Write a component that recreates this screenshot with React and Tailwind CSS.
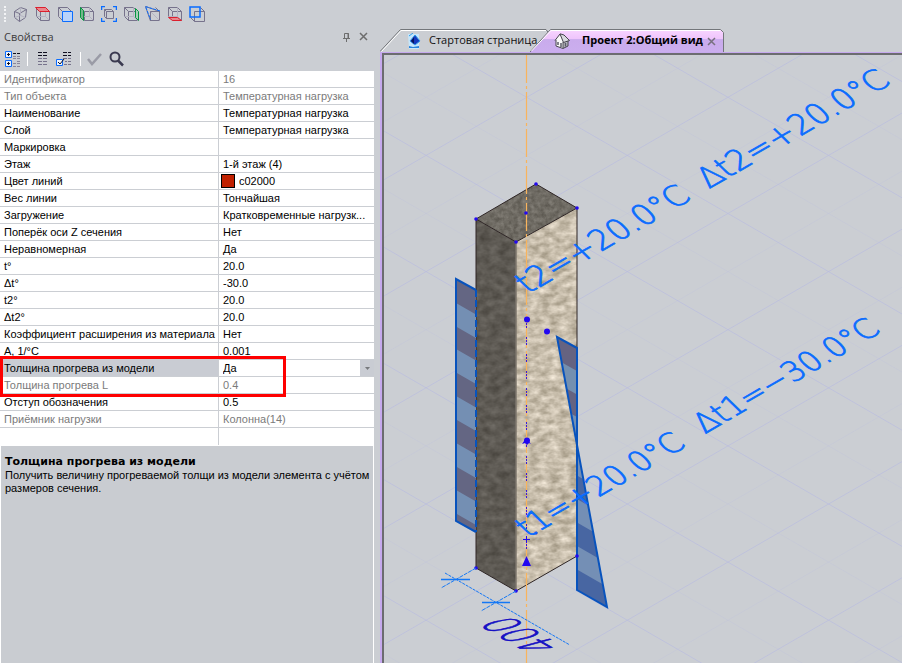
import React, { useState } from "react";

const properties = [
  { name: "Идентификатор", value: "16", readOnly: true },
  { name: "Тип объекта", value: "Температурная нагрузка", readOnly: true },
  { name: "Наименование", value: "Температурная нагрузка" },
  { name: "Слой", value: "Температурная нагрузка" },
  { name: "Маркировка", value: "" },
  { name: "Этаж", value: "1-й этаж (4)" },
  { name: "Цвет линий", value: "c02000", swatch: true },
  { name: "Вес линии", value: "Тончайшая" },
  { name: "Загружение", value: "Кратковременные нагрузк..." },
  { name: "Поперёк оси Z сечения", value: "Нет" },
  { name: "Неравномерная", value: "Да" },
  { name: "t°", value: "20.0" },
  { name: "Δt°", value: "-30.0" },
  { name: "t2°", value: "20.0" },
  { name: "Δt2°", value: "20.0" },
  { name: "Коэффициент расширения из материала", value: "Нет" },
  { name: "A, 1/°C", value: "0.001" },
  { name: "Толщина прогрева из модели", value: "Да", selected: true },
  { name: "Толщина прогрева L", value: "0.4", readOnly: true },
  { name: "Отступ обозначения", value: "0.5" },
  { name: "Приёмник нагрузки", value: "Колонна(14)", readOnly: true },
];

const GRAY = "#77738c";
const BLUE = "#0a6cff";

// Wireframe box shared by the view icons
function Box() {
  return (
    <g stroke={GRAY} fill="none">
      <path d="M5.5 5.5h9v9h-9zM1.5 1.5h9l4 4M1.5 1.5l4 4M1.5 1.5v9l4 4" />
      <path d="M10.5 1.5v9h-9M10.5 10.5l4 4" stroke="#b4b3c2" />
    </g>
  );
}

const viewIcons = [
  {
    label: "Аксонометрия",
    art: (
      <g stroke={GRAY} fill="none">
        <path d="M1.5 5.5l6-4 6 2-1 8-6 4-5-4zM1.5 5.5l5 2 7-4M6.5 7.5v8" />
        <path d="M7.5 1.5v8l-6 2M7.5 9.5l5 2" stroke="#b4b3c2" />
      </g>
    ),
  },
  {
    label: "Сверху",
    art: (
      <>
        <Box />
        <path d="M.5 1.5h10l4 4h-10z" fill="#e9868c" stroke="#dc1f2d" />
      </>
    ),
  },
  {
    label: "Спереди",
    art: (
      <>
        <path d="M1.5 1.5h9l4 4M1.5 1.5l4 4M1.5 1.5v9l4 4" stroke={GRAY} fill="none" />
        <path d="M5.5 5.5h10v10h-10z" fill="#b9d3fa" stroke={BLUE} />
      </>
    ),
  },
  {
    label: "Слева",
    art: (
      <>
        <Box />
        <path d="M1.5 1.5l3 3v10l-3-3z" fill="#72b58b" stroke="#079541" />
      </>
    ),
  },
  {
    label: "Вписать",
    art: (
      <>
        <path d="M.5 4V.5H4M12 .5h3.5V4M.5 12v3.5H4M12 15.5h3.5V12" fill="none" stroke={BLUE} strokeWidth="1.5" />
        <path d="M5.5 5.5h7v7h-7zM3.5 3.5h7l2 2M3.5 3.5l2 2M3.5 3.5v7l2 2" fill="none" stroke={GRAY} />
      </>
    ),
  },
  {
    label: "Справа",
    art: (
      <>
        <Box />
        <path d="M12.5 2.5l3 3v9l-3-3z" fill="#a8cdb7" stroke="#079541" />
      </>
    ),
  },
  {
    label: "По грани",
    art: (
      <>
        <path d="M5.5 5.5h9v9h-9M10.5 1.5l4 4" fill="none" stroke={GRAY} />
        <path d="M5.5 5.5l9 9" stroke="#b4b3c2" />
        <path d="M15 5.5H5.5V15L.5 .5L15 5.500" fill="none" stroke={GRAY} />
        <path d="M15 5L.5 .5l5 13" fill="none" stroke={BLUE} strokeDasharray="3 1" />
      </>
    ),
  },
  {
    label: "Снизу",
    art: (
      <>
        <Box />
        <path d="M1.5 11.5h9l4 3h-9z" fill="#e9868c" stroke="#dc1f2d" />
      </>
    ),
  },
  {
    label: "Сзади",
    art: (
      <>
        <path d="M5.5 5.5h10v10h-10zM1.5 11.5l4 4M11.5 1.5l4 4" stroke={GRAY} fill="none" />
        <path d="M1 1h10v10H1z" fill="none" stroke={BLUE} strokeWidth="1.5" />
      </>
    ),
  },
];

function IconButton({ label, className, children }) {
  return (
    <button aria-label={label} className={className}>
      <svg width="16" height="16" viewBox="0 0 16 16">
        {children}
      </svg>
    </button>
  );
}

function ViewToolbar() {
  return (
    <div className="flex h-7 items-center gap-[6px] pl-1">
      <div className="h-4 w-[3px] border-l-2 border-dotted border-[#f2f3f5]" />
      {viewIcons.map((icon) => (
        <IconButton key={icon.label} label={icon.label}>
          {icon.art}
        </IconButton>
      ))}
    </div>
  );
}

function PanelToolbar() {
  return (
    <div className="flex h-[25px] items-center pl-1">
      <IconButton label="По категориям" className="mr-[7px]">
        <path d="M1.5 .5h6v6h-6zM1.5 9.5h6v6h-6z" fill="#eef3fb" stroke={BLUE} />
        <path d="M3 3.5h3M4.5 2v3M3 12.5h3M4.5 11v3M9 2.5h3M13 2.5h3" stroke="#101020" />
        <path
          d="M9 5.5h3M13 5.5h3M9 7.5h3M13 7.5h3M13 10.5h3M9 12.5h3M13 12.5h3M9 15.5h3M13 15.5h3"
          stroke="#8a879b"
        />
      </IconButton>
      <div className="mr-2 h-[14px] w-px bg-white" />
      <IconButton label="По алфавиту" className="mr-1">
        <path d="M2 1.5h4M7 1.5h4M2 4.5h4M7 4.5h4" stroke="#101020" />
        <path d="M2 7.5h4M7 7.5h4M2 10.5h4M7 10.5h4M2 13.5h4M7 13.5h4" stroke={GRAY} />
      </IconButton>
      <IconButton label="Только заданные" className="mr-2">
        <path d="M.5 8.5h6v6h-6z" fill="#eef3fb" stroke={BLUE} />
        <path d="M2 11l2 2 4-5M7 1.5h4M12 1.5h3M7 4.5h4M12 4.5h3" fill="none" stroke="#101020" />
        <path d="M7 7.5h4M12 7.5h3M9 10.5h2M12 10.5h3M8 13.5h3M12 13.5h3" stroke={GRAY} />
      </IconButton>
      <div className="mr-[6px] h-[14px] w-px bg-white" />
      <IconButton label="Применить" className="mr-[6px]">
        <path d="M1 8l4 5L14 3" fill="none" stroke="#9a9ba6" strokeWidth="2.5" />
      </IconButton>
      <IconButton label="Найти">
        <circle cx="6" cy="6" r="4.5" fill="none" stroke="#3b3a50" strokeWidth="2" />
        <path d="M9 9.500l5 5" stroke="#3b3a50" strokeWidth="2.5" />
      </IconButton>
    </div>
  );
}

function PropertyRow({ item, value, onChange }) {
  const textColor = item.readOnly ? "text-[#7b7b7b]" : "text-black";

  if (item.selected) {
    return (
      <tr className="h-[17px]">
        <th className="relative border-r border-b border-[#cbced3] bg-[#c9ccd3] pl-1 text-left font-normal">
          <label htmlFor="heating">{item.name}</label>
          <div className="pointer-events-none absolute -top-1 left-0 z-10 h-[41px] w-[286px] border-3 border-[#fe0000]" />
        </th>
        <td className="relative border-b border-[#cbced3] bg-white p-0">
          <select
            id="heating"
            value={value}
            onChange={(e) => onChange(e.target.value)}
            className="block h-4 w-full appearance-none pl-1 leading-4"
          >
            <option>Да</option>
            <option>Нет</option>
          </select>
          <div className="pointer-events-none absolute top-0 right-0 flex h-4 w-[14px] items-center justify-center bg-[#c9ccd3]">
            <svg width="5" height="3" viewBox="0 0 5 3">
              <path d="M0 0h5L2.5 3z" fill="#77797d" />
            </svg>
          </div>
        </td>
      </tr>
    );
  }

  return (
    <tr className={`h-[17px] ${textColor}`}>
      <th className="border-r border-b border-[#cbced3] bg-white pl-1 text-left font-normal whitespace-nowrap">
        {item.name}
      </th>
      <td className="border-b border-[#cbced3] bg-white p-0">
        <div className={item.swatch ? "flex items-center gap-1 pl-[2px]" : "pl-1 whitespace-nowrap"}>
          {item.swatch && <span className="size-[14px] border border-black bg-[#c02000]" />}
          {item.value}
        </div>
      </td>
    </tr>
  );
}

function PropertiesPanel() {
  const [heating, setHeating] = useState("Да");

  return (
    <aside className="flex w-[374px] shrink-0 flex-col">
      <div className="flex h-[18px] items-center pr-[5px] pl-1">
        <h2 className="grow font-['Open_Sans','Noto_Sans',sans-serif] text-[11px] text-[#3c3c3c]">Свойства</h2>
        <button aria-label="Закрепить" className="mr-2">
          <svg width="8" height="10" viewBox="0 0 8 10" fill="none" stroke="#6d6d6d">
            <path d="M1.5 6V1.5h4V6M5 1v5M0 6.5h7M3.5 7v3" />
          </svg>
        </button>
        <button aria-label="Закрыть">
          <svg width="10" height="10" viewBox="0 0 10 10" stroke="#6d6d6d" strokeWidth="1.5">
            <path d="M1 1l7 7M8 1L1 8" />
          </svg>
        </button>
      </div>
      <PanelToolbar />
      <table className="w-full table-fixed border-separate border-spacing-0 leading-4">
        <colgroup>
          <col className="w-[219px]" />
          <col />
        </colgroup>
        <tbody>
          {properties.map((item) => (
            <PropertyRow key={item.name} item={item} value={heating} onChange={setHeating} />
          ))}
          <tr className="h-[17px]">
            <td className="border-r border-[#cbced3] bg-white" />
            <td className="bg-white" />
          </tr>
        </tbody>
      </table>
      <section className="grow border-x border-t border-white bg-[#c9ccd1] pt-2 pl-1">
        <h3 className="font-['DejaVu_Sans',sans-serif] text-[11px] leading-[15px] font-bold">
          Толщина прогрева из модели
        </h3>
        <p className="leading-[13px]">
          Получить величину прогреваемой толщи из модели элемента с учётом размеров сечения.
        </p>
      </section>
    </aside>
  );
}

function Tabs() {
  return (
    <div role="tablist" className="flex h-[23px] font-['Open_Sans','Noto_Sans',sans-serif] text-[11px]">
      <button role="tab" aria-selected="false" className="relative flex w-[150px] items-center pl-7">
        <svg className="absolute top-0 left-0" width="172" height="23">
          <path d="M0 22.5L20.5 .5H166l3 4" fill="none" stroke="#73767a" />
          <path d="M1.5 22.5L21 1.5H166" fill="none" stroke="#fff" />
        </svg>
        <svg className="relative mr-2 shrink-0" width="13" height="16" viewBox="0 0 13 16">
          <path d="M0 1h11v15H1z" fill="#c5e6fb" />
          <path d="M1 3l4-3M2 8l5-6 5 6-5 4z" fill="#1338bd" stroke="#319be8" />
          <path d="M6 4v7l-3-3z" fill="#08125e" />
          <path d="M1 13l4 1 6-1v2H1z" fill="#2784df" />
        </svg>
        <span className="relative z-10 whitespace-nowrap text-[#111]">Стартовая страница</span>
      </button>
      <button role="tab" aria-selected="true" className="relative flex w-[194px] items-center pl-6">
        <svg className="absolute top-0 left-0" width="194" height="23">
          <defs>
            <linearGradient id="tabFill" x1="0" y1="0" x2="0" y2="1">
              <stop offset="0" stopColor="#f8d5ff" />
              <stop offset="0.4" stopColor="#efc5fc" />
              <stop offset="0.45" stopColor="#c9abec" />
              <stop offset="1" stopColor="#cbaeee" />
            </linearGradient>
          </defs>
          <path d="M0 23L20.5 .5H190.5l3 3V23" fill="url(#tabFill)" stroke="#73767a" />
          <path d="M1.5 22L21 1.5H190" fill="none" stroke="#fff" />
        </svg>
        <svg className="relative mr-3 shrink-0" width="16" height="16" viewBox="0 0 16 16">
          <path d="M2 6l4-4 3 6v7.500L2 13z" fill="#fafafa" />
          <path d="M9 8l5-1v6l-5 2.500z" fill="#b9b9c1" />
          <path d="M6 1l4 1 5.500 5.500-6 2z" fill="#d9d9df" />
          <path d="M1 7.500L6 1l3.500 8.500 6-2L10 2 6 .8M2 7v6l7 2.500 5-2.500V8M9 9v6" fill="none" stroke="#46464d" />
          <path d="M4 9v3M7 10v4M11.500 10v3.500" stroke="#5b5b66" strokeWidth="1.500" />
        </svg>
        <span className="relative font-bold whitespace-nowrap">Проект 2:Общий вид</span>
        <svg className="absolute top-2 right-2" width="9" height="9" viewBox="0 0 9 9" stroke="#77707f" strokeWidth="1.5">
          <path d="M1 1l7 7M8 1L1 8" />
        </svg>
      </button>
    </div>
  );
}

// Isometric floor grid, both directions run at 30 degrees
function FloorGrid() {
  const slope = 0.5774;
  const lines = [];
  for (let i = -14; i <= 18; i++) {
    const y = 97.3 + i * 58.1;
    const opacity = i % 2 === 0 ? 0.65 : 0.22;
    lines.push(
      <g key={i} stroke="#b9bce0" opacity={opacity}>
        <line x1="380" y1={y + (380 - 526.7) * slope} x2="910" y2={y + (910 - 526.7) * slope} />
        <line x1="380" y1={y - (380 - 526.7) * slope} x2="910" y2={y - (910 - 526.7) * slope} />
      </g>
    );
  }
  return <g>{lines}</g>;
}

function LoadLabel({ x, y, size, children }) {
  return (
    <text
      transform={`translate(${x} ${y}) rotate(-30) skewX(16)`}
      fontSize={size}
      fill={BLUE}
      stroke={BLUE}
      strokeWidth="0.8"
    >
      {children}
    </text>
  );
}

function Concrete({ id, frequency, seed, matrix }) {
  return (
    <filter id={id} x="0" y="0" width="1" height="1" colorInterpolationFilters="sRGB">
      <feTurbulence type="fractalNoise" baseFrequency={frequency} numOctaves="3" seed={seed} />
      <feColorMatrix values={matrix} />
      <feComposite in2="SourceGraphic" operator="in" />
    </filter>
  );
}

function Scene() {
  const leftStripes = [303, 349, 396, 443, 490];
  const upperStripes = [371, 417];
  const lowerStripes = [452, 499, 546];
  const nodes = [[476, 219], [536, 184], [577, 208], [516, 242], [526, 213], [476, 568], [516, 591], [577, 556]];

  return (
    <svg
      className="absolute inset-0 size-full font-['DejaVu_Sans',sans-serif] font-extralight"
      viewBox="384 55 518 608"
      preserveAspectRatio="xMinYMin slice"
    >
      <defs>
        <Concrete
          id="concreteLight"
          frequency="0.1 0.16"
          seed="4"
          matrix="0.42 0 0 0 0.57  0.42 0 0 0 0.53  0.44 0 0 0 0.45  0 0 0 0 1"
        />
        <Concrete
          id="concreteDark"
          frequency="0.1 0.14"
          seed="9"
          matrix="0.2 0 0 0 0.265  0.2 0 0 0 0.25  0.2 0 0 0 0.225  0 0 0 0 1"
        />
        <Concrete
          id="concreteTop"
          frequency="0.22"
          seed="2"
          matrix="0.22 0 0 0 0.325  0.22 0 0 0 0.31  0.22 0 0 0 0.28  0 0 0 0 1"
        />
        <clipPath id="upperWedge">
          <path d="M557 337l20 11v97z" />
        </clipPath>
        <clipPath id="lowerWedge">
          <path d="M577 445v145l30 17z" />
        </clipPath>
      </defs>

      <FloorGrid />

      {/* Column */}
      <path d="M476 219l60-35 41 24-61 34z" fill="#6d6a61" filter="url(#concreteTop)" />
      <path d="M476 219l40 23v349l-40-23z" fill="#5b5850" filter="url(#concreteDark)" />
      <path d="M516 242l61-34v348l-61 35z" fill="#c7bdac" filter="url(#concreteLight)" />
      <path d="M476 219l60-35 41 24-61 34zM476 219v349l40 23 61-35V208" fill="none" stroke="#2e2525" />
      <path d="M516 242v349" stroke="#7d766d" strokeWidth="1.5" />

      {/* Load on the left face */}
      <path d="M456 279l20 11v242l-20-11z" fill="#646683" />
      {leftStripes.map((y) => (
        <path key={y} d={`M456 ${y}l20 11.5v23.5l-20-11.5z`} fill="#748fb3" />
      ))}
      <path d="M476 290l-20-11v242l20 11" fill="none" stroke="#0853bd" strokeWidth="2" />
      <path d="M476 290v242" stroke="#0853bd" strokeWidth="2" strokeDasharray="7 3" />

      {/* Load on the right face */}
      <path d="M557 337l20 11v97z" fill="#656381" />
      <g clipPath="url(#upperWedge)">
        {upperStripes.map((y) => (
          <path key={y} d={`M547 ${y - 17}l30 17v23.5l-30-17z`} fill="#7490b0" />
        ))}
      </g>
      <path d="M577 445v145l30 17z" fill="#4866a2" />
      <g clipPath="url(#lowerWedge)">
        {lowerStripes.map((y) => (
          <path key={y} d={`M577 ${y}l32 18.5v23.5l-32-18.5z`} fill="#748fb5" />
        ))}
      </g>
      <path d="M577 348l-20-11 50 270-30-17z" fill="none" stroke="#0853bd" strokeWidth="2" />

      {/* Axes */}
      <path d="M526.5 55v608" stroke="#f9b45c" strokeDasharray="28 3 3 3" strokeWidth="1.2" />
      <path d="M526.5 320v245" stroke="#3a1cd8" strokeDasharray="2 1 2 1 2 9" />
      <g fill="#2208f0">
        {nodes.map(([x, y]) => (
          <circle key={`${x}-${y}`} cx={x} cy={y} r="1.8" />
        ))}
        <circle cx="527" cy="319.5" r="3" />
        <circle cx="547" cy="331.5" r="3" />
        <circle cx="527" cy="440.5" r="3" />
        <circle cx="536" cy="533" r="1.5" />
        <path d="M522 444l4-6 5 6-2-1-2 2-2-2zM522 566l4.5-10 4.5 10z" />
      </g>
      <path d="M523 539.5h7M526.5 536v7" stroke="#2208f0" />

      {/* Dimension */}
      <g stroke="#1478f5" fill="none">
        <path d="M445 573l124 71.5" strokeDasharray="3 1" />
        <path d="M476 568l-35 20M516 591l-35 20" strokeDasharray="4 1" />
        <path d="M441 579.5h29M482 602.5h28" strokeWidth="1.5" />
      </g>
      <text
        transform="translate(562 646) rotate(210) skewX(-45)"
        fontSize="32"
        fill="#1510c4"
        stroke="#1510c4"
        strokeWidth="0.8"
      >
        400
      </text>

      <LoadLabel x={528} y={294} size={31}>t2=+20.0°C</LoadLabel>
      <LoadLabel x={709} y={189} size={31}>Δt2=+20.0°C</LoadLabel>
      <LoadLabel x={528} y={538} size={30}>t1=+20.0°C</LoadLabel>
      <LoadLabel x={705} y={434} size={30}>Δt1=−30.0°C</LoadLabel>
    </svg>
  );
}

function App() {
  return (
    <div className="flex min-h-screen bg-[#cbced3] font-['Liberation_Sans',Arial,sans-serif] text-[11px] text-black">
      <div className="flex w-[380px] shrink-0 flex-col">
        <ViewToolbar />
        <div className="flex grow">
          <PropertiesPanel />
        </div>
      </div>
      <main className="flex min-w-0 grow flex-col pt-[29px]">
        <Tabs />
        <div className="flex grow border-t border-l-2 border-[#c6a9ee]">
          <div className="relative grow overflow-hidden border-t-2 border-l-2 border-[#6c6c70]">
            <Scene />
          </div>
        </div>
      </main>
    </div>
  );
}

export default App;
